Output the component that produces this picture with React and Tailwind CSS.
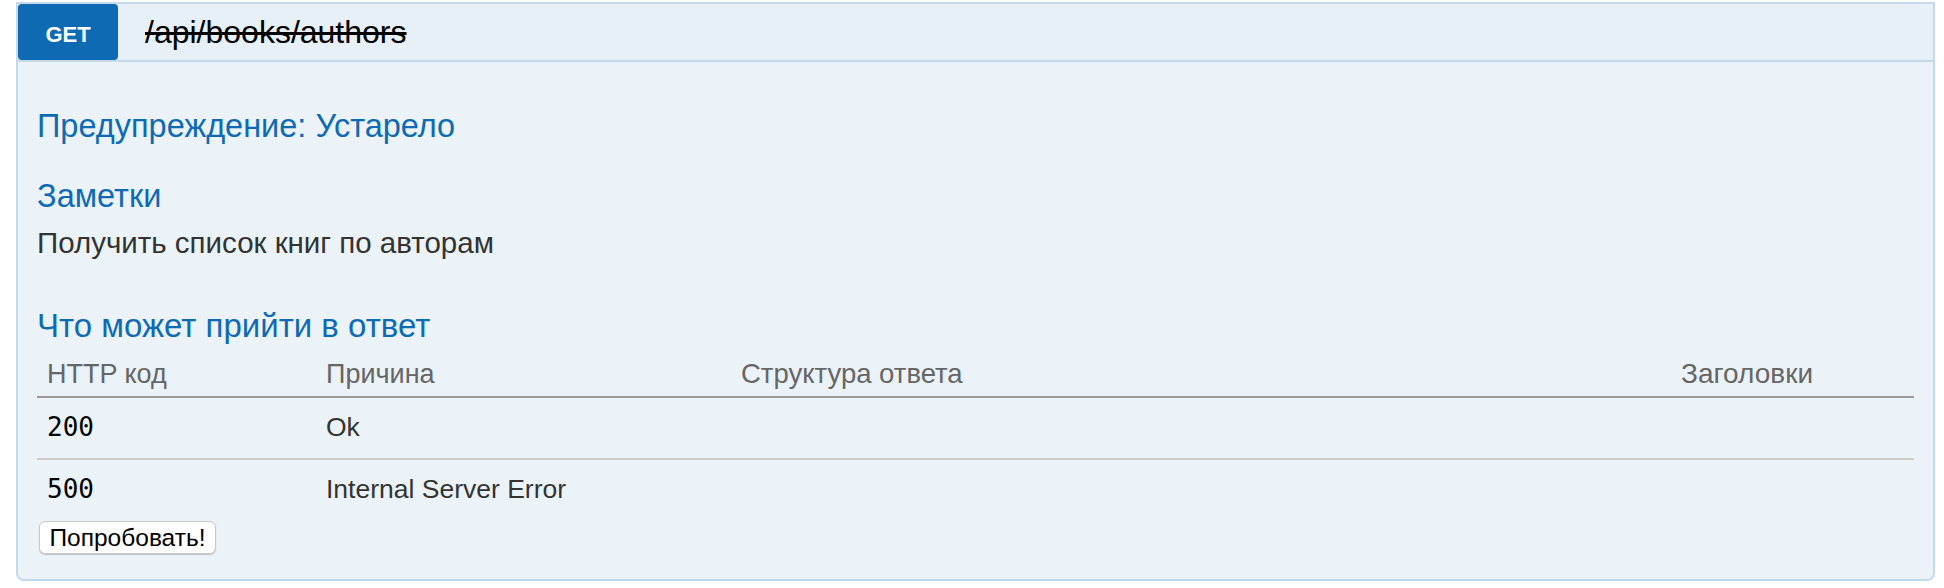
import React from 'react';

const responses = [
  { code: '200', reason: 'Ok', cell: 'pt-[11px] pb-[13px]' },
  { code: '500', reason: 'Internal Server Error', cell: 'pt-[11px] pb-[10px]' },
];

const App = () => {
  return (
    <div className="min-h-screen bg-white pt-[2px] pl-[16px] pr-[9px] font-['Liberation_Sans',Arial,sans-serif]">
      {/* Operation heading */}
      <div className="flex h-[60px] items-stretch border-2 border-[#c3d9ec] bg-[#e7f0f7]">
        <span className="flex w-[100px] items-center justify-center rounded-[4px] bg-[#0f6ab4] pt-[4px] text-[22px] font-bold text-white">
          GET
        </span>
        <span className="flex items-center pl-[27px] text-[32px] text-black line-through">
          /api/books/authors
        </span>
      </div>

      {/* Operation content */}
      <div className="rounded-b-[8px] border-2 border-t-0 border-[#c3d9ec] bg-[#ebf3f9] px-[19px] pt-[44px] pb-[25px]">
        <h4 className="text-[32.5px] leading-[40px] text-[#0f6ab4]">Предупреждение: Устарело</h4>

        <h4 className="mt-[30px] text-[32.5px] leading-[40px] text-[#0f6ab4]">Заметки</h4>
        <p className="mt-[9px] text-[29.5px] leading-[36px] text-[#333]">Получить список книг по авторам</p>

        <h4 className="mt-[45px] text-[33px] leading-[40px] text-[#0f6ab4]">Что может прийти в ответ</h4>

        <table className="w-full border-collapse text-[26.5px]">
          <thead>
            <tr className="border-b-2 border-[#999]">
              <th className="w-[279px] pt-[10px] pb-[4px] pl-[10px] text-left text-[27px] font-normal leading-[36px] text-[#666]">HTTP код</th>
              <th className="w-[415px] pt-[10px] pb-[4px] pl-[10px] text-left text-[27px] font-normal leading-[36px] text-[#666]">Причина</th>
              <th className="pt-[10px] pb-[4px] pl-[10px] text-left text-[27.5px] font-normal leading-[36px] text-[#666]">Структура ответа</th>
              <th className="w-[243px] pt-[10px] pb-[4px] pl-[10px] text-left text-[28px] font-normal leading-[36px] text-[#666]">Заголовки</th>
            </tr>
          </thead>
          <tbody>
            {responses.map((r, i) => (
              <tr key={r.code} className={i < responses.length - 1 ? 'border-b-2 border-[#ccc]' : ''}>
                <td className={`${r.cell} pl-[10px] font-['DejaVu_Sans_Mono',monospace] text-[26px] leading-[36px] text-black`}>{r.code}</td>
                <td className={`${r.cell} pl-[10px] leading-[36px] text-[#333]`}>{r.reason}</td>
                <td className={`${r.cell} pl-[10px]`}></td>
                <td className={`${r.cell} pl-[10px]`}></td>
              </tr>
            ))}
          </tbody>
        </table>

        <button className="mt-[4px] ml-[2px] h-[33px] w-[177px] rounded-[6px] border border-[#c8c8c8] bg-white text-[24.5px] leading-[28px] text-black shadow-[0_1px_1px_rgba(0,0,0,0.2)]">
          Попробовать!
        </button>
      </div>
    </div>
  );
};

export default App;
